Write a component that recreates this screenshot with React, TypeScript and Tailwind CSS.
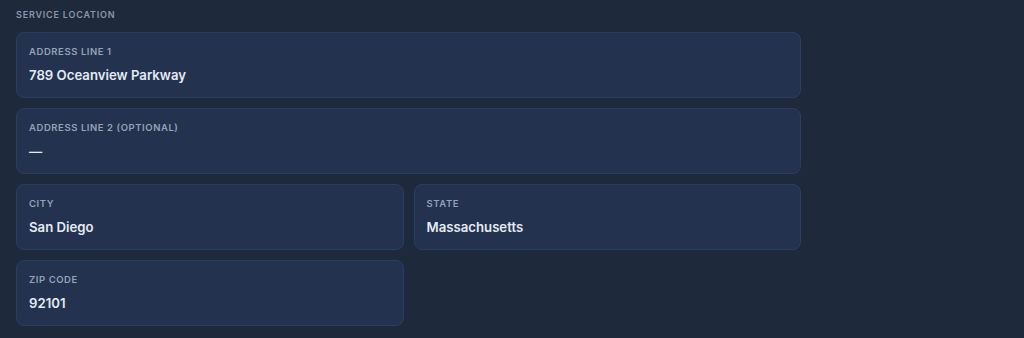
import React from 'react'

type Field = { label: string; value: string }

function FieldCard({ label, value }: Field) {
  return (
    <div className="rounded-lg border border-[#2c3e5f] bg-[#22324f] p-3">
      <div className="text-[9.5px] font-semibold uppercase leading-[14px] tracking-[0.06em] text-[#94a3b8]">
        {label}
      </div>
      <div className="mt-[6px] text-[13.2px] font-semibold leading-5 text-[#e5eaf2]">{value}</div>
    </div>
  )
}

export default function App() {
  return (
    <div
      className="min-h-[338px] w-full bg-[#1e293b] px-4 pt-[9px]"
      style={{ fontFamily: 'Inter, "Noto Sans", sans-serif' }}
    >
      <div className="w-[785px]">
        <h2 className="mb-[11px] text-[9px] font-semibold uppercase leading-3 tracking-[0.09em] text-[#8a97ab]">
          Service Location
        </h2>
        <div className="grid grid-cols-2 gap-[10px]">
          <div className="col-span-2">
            <FieldCard label="Address Line 1" value="789 Oceanview Parkway" />
          </div>
          <div className="col-span-2">
            <FieldCard label="Address Line 2 (Optional)" value="—" />
          </div>
          <FieldCard label="City" value="San Diego" />
          <FieldCard label="State" value="Massachusetts" />
          <FieldCard label="Zip Code" value="92101" />
        </div>
      </div>
    </div>
  )
}
